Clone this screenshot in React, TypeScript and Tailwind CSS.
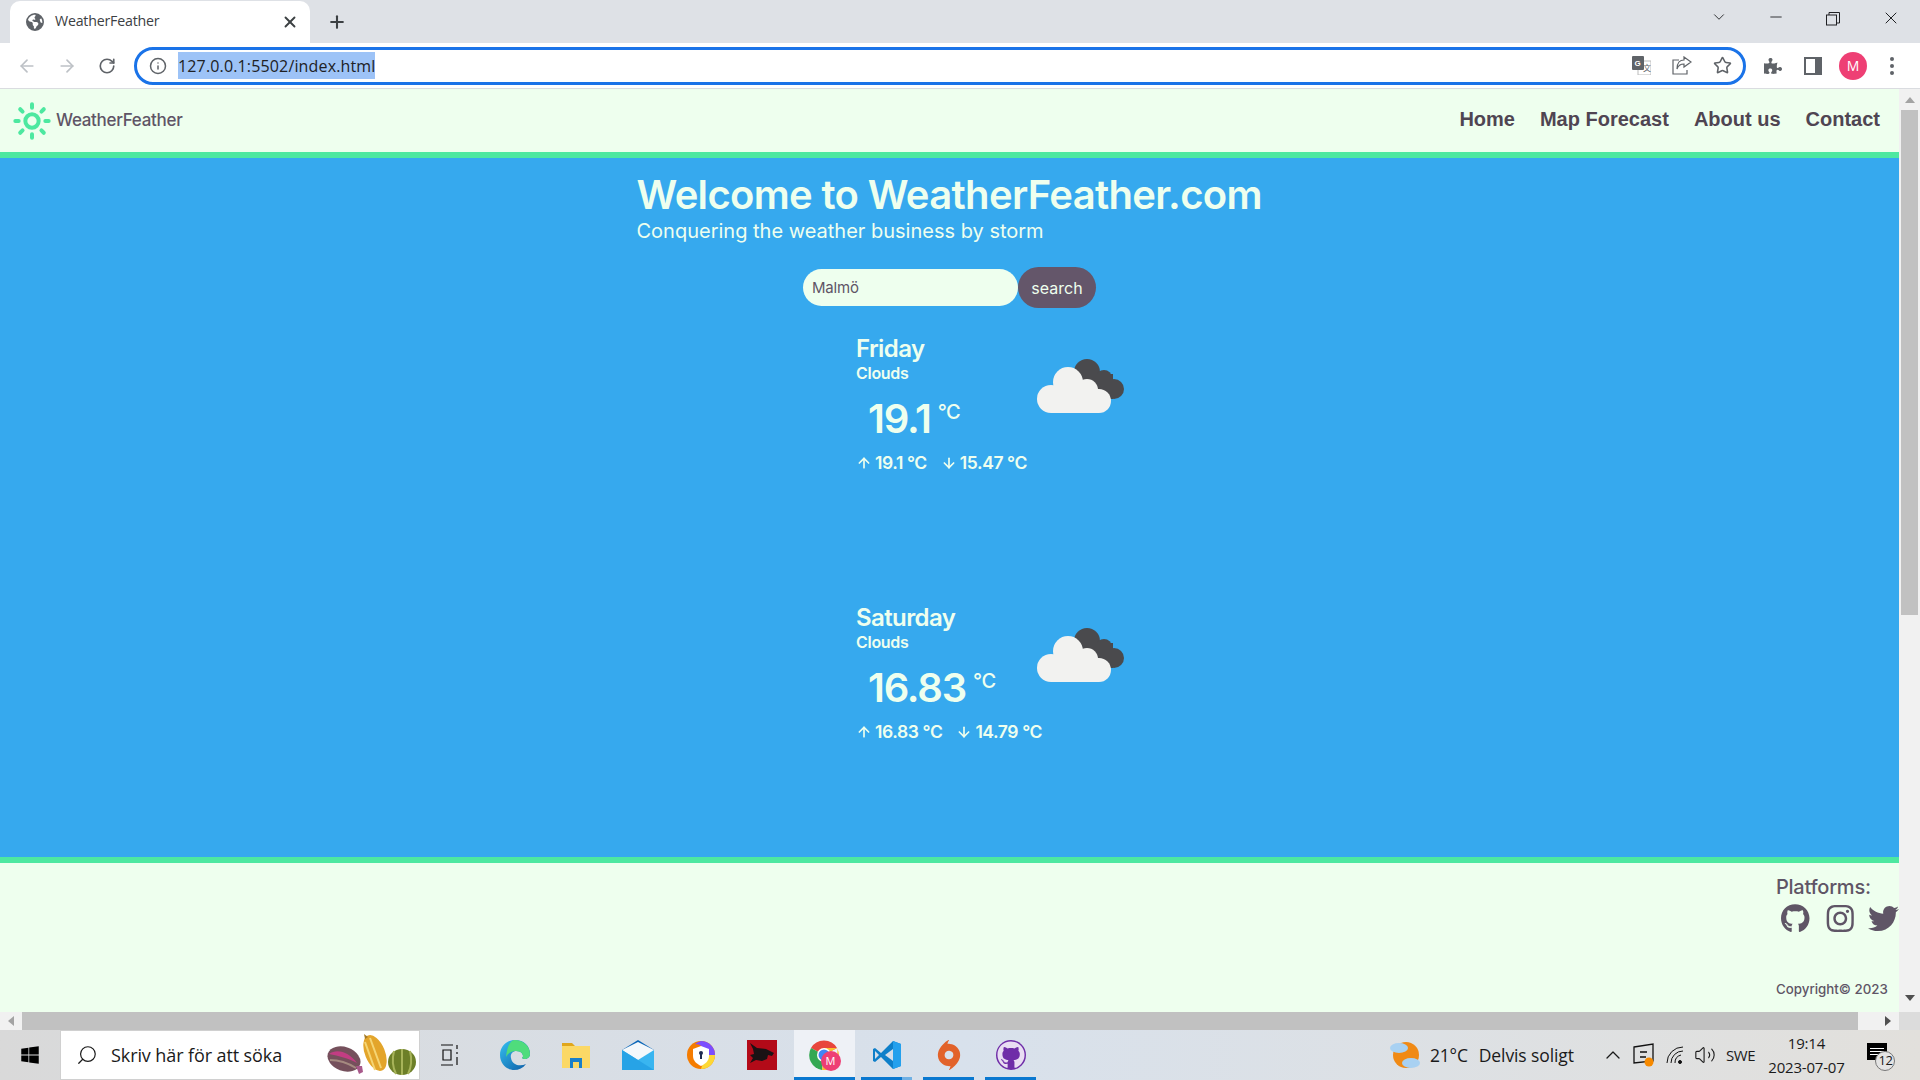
import React from 'react';
import { ArrowDown, ArrowLeft, ArrowRight, ArrowUp, ChevronDown, ChevronUp, Info, Minus, Plus, RotateCw, Search, Star, Sun, Volume2, X } from 'lucide-react';
import { FaGithub, FaInstagram, FaPuzzlePiece, FaTwitter, FaWindows } from 'react-icons/fa';
import { FaEarthAmericas } from 'react-icons/fa6';
import { SiOrigin } from 'react-icons/si';

const CloudIcon = () => (
  <svg width="88" height="55" viewBox="0 0 88 55" className="shrink-0">
    <g fill="#4a4a4d">
      <circle cx="50" cy="13" r="13" />
      <circle cx="67" cy="19" r="8" />
      <circle cx="77" cy="30" r="10" />
      <rect x="42" y="15" width="34" height="25" />
    </g>
    <g fill="#f2f2f0">
      <circle cx="14" cy="40" r="14" />
      <circle cx="31" cy="23" r="15" />
      <circle cx="50" cy="31" r="11" />
      <circle cx="62" cy="42" r="12" />
      <rect x="14" y="30" width="48" height="24" />
    </g>
  </svg>
);

const ForecastCard = ({ day, temp, high, low }: { day: string; temp: string; high: string; low: string }) => (
  <div className="ml-[83px] flex h-[269px] w-[270px] justify-between text-[#eeffee]">
    <div className="w-[148px] whitespace-nowrap">
      <div className="text-2xl leading-[29px] font-semibold tracking-[-0.6px]">{day}</div>
      <div className="text-base leading-[20px] font-semibold tracking-[-0.3px]">Clouds</div>
      <div className="mt-[12px] flex items-start pl-3">
        <span className="text-[40px] leading-[48px] font-semibold tracking-[-1.2px]">{temp}</span>
        <span className="mt-[5px] ml-[7px] text-xl leading-6 font-medium tracking-[-0.5px]">°C</span>
      </div>
      <div className="mt-[10px] flex gap-[14px] text-[17.5px] leading-5 font-semibold tracking-[-0.4px]">
        <span className="flex items-center gap-[3px]"><ArrowUp size={16} strokeWidth={2.5} />{high} °C</span>
        <span className="flex items-center gap-[3px]"><ArrowDown size={16} strokeWidth={2.5} />{low} °C</span>
      </div>
    </div>
    <div className="pt-[25px] pr-[1px]"><CloudIcon /></div>
  </div>
);

const EdgeIcon = () => (
  <svg width="32" height="32" viewBox="0 0 32 32">
    <defs>
      <linearGradient id="edgeA" x1="0" y1="0" x2="1" y2="1"><stop offset="0" stopColor="#35c1f1" /><stop offset="1" stopColor="#0c59a4" /></linearGradient>
    </defs>
    <path d="M16 1C7 1 1 8 1 16c0 9 7 15 14 15 5 0 9-2 12-6-6 3-14 1-15-6-1-4 2-7 5-7 5 0 7 3 7 5 0 1-1 2-1 2 2 2 8 1 8-4C31 7 25 1 16 1z" fill="url(#edgeA)" />
    <path d="M16 1c7 0 15 5 15 14 0 5-6 6-8 4 0 0 1-1 1-2 0-2-2-5-7-5-4 0-8 2-10 6C8 8 11 1 16 1z" fill="#4fdc7c" />
  </svg>
);

const FolderIcon = () => (
  <svg width="28" height="28" viewBox="0 0 28 28">
    <path d="M0 2h10l3 3H0z" fill="#e0a61c" />
    <rect y="5" width="28" height="22" fill="#fbd866" />
    <rect x="8" y="17" width="12" height="10" fill="#1a7fc9" />
    <rect x="11" y="21" width="6" height="6" fill="#fbd866" />
  </svg>
);

const MailIcon = () => (
  <svg width="32" height="30" viewBox="0 0 32 30">
    <path d="M0 10 16 0l16 10v20H0z" fill="#0a66b8" />
    <path d="M0 10h32v20H0z" fill="#39b5f0" />
    <path d="M0 10l16 10 16-10-16-8z" fill="#f4f8fb" />
    <path d="M0 10v20h32z" fill="#27a3e6" />
  </svg>
);

const AvastIcon = () => (
  <svg width="28" height="30" viewBox="0 0 28 30">
    <circle cx="14" cy="15" r="14" fill="#f57c00" />
    <path d="M14 1a14 14 0 0 1 14 14H18A10 10 0 0 0 8 4a14 14 0 0 1 6-3z" fill="#7c4dff" />
    <path d="M28 15a14 14 0 0 1-14 14l2-6 6-8z" fill="#fdd835" />
    <path d="M14 6l8 3v7c0 5-4 8-8 10-4-2-8-5-8-10V9z" fill="#fff" />
    <circle cx="14" cy="13" r="2" fill="#1e2a50" />
    <rect x="13" y="13" width="2" height="6" fill="#1e2a50" />
  </svg>
);

const DragonIcon = () => (
  <svg width="30" height="30" viewBox="0 0 30 30">
    <rect width="30" height="30" fill="#b30a18" />
    <path d="M3 3l7 5 9 1 8 4-2 3-4-1-1 4-5 2-6-1-6 3 3-5-3-3 4-1-1-5z" fill="#1b1214" />
  </svg>
);

const ChromeIcon = () => (
  <div className="relative h-[30px] w-[32px]">
    <svg width="30" height="30" viewBox="0 0 30 30">
      <path d="M15 15 2 8a15 15 0 0 1 26 0z" fill="#e8453c" />
      <path d="M15 15 2 8a15 15 0 0 0 11 22z" fill="#34a853" />
      <path d="M15 15h13a15 15 0 0 0 0-7H15zM15 15l13-7a15 15 0 0 1-15 22z" fill="#fbc02d" />
      <circle cx="15" cy="15" r="7" fill="#fff" />
      <circle cx="15" cy="15" r="5.5" fill="#4285f4" />
    </svg>
    <div className="absolute right-0 bottom-[-1px] flex h-[20px] w-[20px] items-center justify-center rounded-full bg-[#ee3f74] text-[11px] font-medium text-white">M</div>
  </div>
);

const VsCodeIcon = () => (
  <svg width="30" height="30" viewBox="0 0 30 30">
    <path d="M21 1 9 13 3 8 1 9v12l2 1 6-5 12 12 8-3V4z" fill="#0e7fc9" />
    <path d="M21 1l8 3v22l-8 3z" fill="#24a0ed" />
    <path d="M21 9v12l-8-6z" fill="#d5deea" />
    <path d="M3 11l4 4-4 4z" fill="#d5deea" />
  </svg>
);

const FruitIcons = () => (
  <svg width="90" height="42" viewBox="0 0 90 42">
    <ellipse cx="17" cy="25" rx="17" ry="12" transform="rotate(20 17 25)" fill="#75505c" />
    <path d="M2 20c8-6 20-2 28 9-9-5-18-7-28-9z" fill="#c23d83" />
    <path d="M3 26c9 0 18 3 26 8" stroke="#a58a80" strokeWidth="2" fill="none" />
    <path d="M29 32l6 0 1 6-4 2z" fill="#a8598b" />
    <ellipse cx="48" cy="19" rx="10" ry="19" transform="rotate(-22 48 19)" fill="#e3a52b" />
    <path d="M38 5l-1-5 4 3z" fill="#a47a24" />
    <path d="M43 4l11 30M38 8l10 28" stroke="#f5d574" strokeWidth="2" />
    <ellipse cx="75" cy="28" rx="14" ry="13" fill="#6d7f28" />
    <path d="M67 17c-2 8-2 15 2 23M75 15v26M83 17c2 8 2 15-2 23" stroke="#a8b45a" strokeWidth="2" fill="none" />
  </svg>
);

const WeatherTrayIcon = () => (
  <svg width="32" height="28" viewBox="0 0 32 28">
    <circle cx="16" cy="14" r="13" fill="#f08a15" />
    <g fill="#a8d1f2">
      <ellipse cx="9" cy="7" rx="9" ry="5" />
      <ellipse cx="21" cy="22" rx="9" ry="5" />
    </g>
  </svg>
);

const TaskButton = ({ children, active, bar, className }: { children: React.ReactNode; active?: boolean; bar?: boolean; className: string }) => (
  <div className={`relative flex h-full items-center justify-center ${active ? 'bg-[#eef1f6]' : ''} ${className}`}>
    {children}
    {bar && <div className="absolute right-0 bottom-0 left-0 h-[3px] bg-[#0a78d0]" />}
  </div>
);

const BrowserChrome = () => (
  <div className="font-['Open_Sans'] text-[#3c4043]">
    <div className="flex h-[43px] bg-[#dee1e6] pl-[10px]">
      <div className="mt-[1px] flex h-[42px] w-[300px] items-center rounded-t-[10px] bg-white pr-[11px] pl-[16px]">
        <FaEarthAmericas size={18} className="text-[#5f6368]" />
        <span className="ml-[11px] -mt-[2px] flex-1 text-[14.2px] tracking-[-0.2px]">WeatherFeather</span>
        <X size={18} strokeWidth={2.5} className="text-[#3c4043]" />
      </div>
      <div className="ml-[17px] flex h-full items-center"><Plus size={20} strokeWidth={2.5} /></div>
      <div className="ml-auto flex items-start pt-[8px] text-[#202124]">
        <ChevronDown size={18} strokeWidth={1.2} />
        <div className="ml-[39px] flex w-[18px] justify-center"><Minus size={18} strokeWidth={1.2} /></div>
        <svg width="14" height="14" viewBox="0 0 14 14" className="mt-[4px] ml-[41px]" fill="none" stroke="#202124">
          <rect x="0.5" y="3" width="10" height="10" />
          <path d="M3 3V.5h10.500V11H10.500" />
        </svg>
        <div className="mr-[19px] ml-[41px]"><X size={20} strokeWidth={1.2} /></div>
      </div>
    </div>
    <div className="flex h-[46px] items-center border-b border-[#dadce0] bg-white">
      <ArrowLeft size={20} className="ml-[17px] text-[#bdc1c6]" />
      <ArrowRight size={20} className="ml-[20px] text-[#bdc1c6]" />
      <RotateCw size={18} strokeWidth={2.2} className="ml-[21px] text-[#5f6368]" />
      <div className="ml-[18px] flex h-[38px] w-[1612px] items-center rounded-full border-[3px] border-[#1a73e8] pr-[11px] pl-[12px]">
        <Info size={18} className="text-[#5f6368]" />
        <span className="ml-[11px] flex h-[27px] items-center bg-[#9dc3f7] text-[16px] tracking-[0.15px] text-[#202124]">127.0.0.1:5502/index.html</span>
        <div className="ml-auto flex items-center gap-[21px] text-[#5f6368]">
          <svg width="19" height="19" viewBox="0 0 19 19">
            <rect x="6" y="5" width="13" height="14" fill="#fff" stroke="#bbb" />
            <rect width="12" height="14" rx="1" fill="#5f6368" />
            <text x="2.500" y="10" fontSize="8" fontWeight="700" fill="#fff" fontFamily="Liberation Sans">G</text>
            <text x="11" y="15" fontSize="8" fill="#5f6368" fontFamily="Noto Sans CJK SC">文</text>
          </svg>
          <svg width="20" height="19" viewBox="0 0 20 19" fill="none" stroke="#5f6368" strokeWidth="1.2">
            <path d="M7 4H1v14h14v-4" />
            <path d="M12 1l7 5-7 5V8C8 8 6 10 5 13c0-6 3-9 7-9z" />
          </svg>
          <Star size={19} strokeWidth={2} />
        </div>
      </div>
      <div className="ml-[18px] flex items-center text-[#5f6368]">
        <FaPuzzlePiece size={18} />
        <svg width="18" height="18" viewBox="0 0 18 18" className="ml-[22px]">
          <rect width="18" height="18" fill="#5f6368" />
          <rect x="2" y="2" width="9" height="14" fill="#fff" />
        </svg>
        <div className="ml-[17px] flex h-[28px] w-[28px] items-center justify-center rounded-full bg-[#ee3f74] text-[14px] text-white">M</div>
        <div className="mr-[13px] ml-[23px] flex flex-col gap-[3px]">
          <span className="h-[4px] w-[4px] rounded-full bg-[#5f6368]" />
          <span className="h-[4px] w-[4px] rounded-full bg-[#5f6368]" />
          <span className="h-[4px] w-[4px] rounded-full bg-[#5f6368]" />
        </div>
      </div>
    </div>
  </div>
);

const WebPage = () => (
  <div className="flex h-[923px] w-[1899px] flex-col overflow-hidden font-[Inter]">
    <header className="flex h-[69px] items-center justify-between border-b-[6px] border-[#4de8a0] bg-[#eeffee] pr-[19px] pl-[12px] text-[#5f5566]">
      <div className="flex items-center">
        <Sun size={40} strokeWidth={2.4} className="text-[#4de8a0]" />
        <span className="ml-[4px] text-[17px] font-medium tracking-[-0.3px]">WeatherFeather</span>
      </div>
      <nav className="-mt-[3px] flex gap-[25px] font-['Liberation_Sans'] text-[20px] font-bold text-[#4f4552]">
        <a>Home</a>
        <a>Map Forecast</a>
        <a>About us</a>
        <a>Contact</a>
      </nav>
    </header>
    <main className="flex h-[699px] flex-col items-center bg-[#36a9ee] pt-[13px]">
      <div className="w-[626px] text-[#eeffee]">
        <h1 className="text-[40px] leading-[48px] font-semibold tracking-[-0.66px] whitespace-nowrap">Welcome to WeatherFeather.com</h1>
        <p className="text-xl leading-[24px]">Conquering the weather business by storm</p>
      </div>
      <form className="mt-[24px] flex items-center">
        <input readOnly value="Malmö" className="h-[37px] w-[215px] rounded-full bg-[#eeffee] px-[9px] text-[15px] tracking-[-0.2px] text-[#5f5566] outline-none" />
        <button type="button" className="h-[41px] w-[78px] rounded-full bg-[#64566a] text-[16px] text-[#eeffee]">search</button>
      </form>
      <div className="mt-[26px]">
        <ForecastCard day="Friday" temp="19.1" high="19.1" low="15.47" />
        <ForecastCard day="Saturday" temp="16.83" high="16.83" low="14.79" />
      </div>
    </main>
    <footer className="flex h-[155px] justify-end border-t-[6px] border-[#4de8a0] bg-[#eeffee] text-[#5f5566]">
      <div className="w-[123px]">
        <div className="mt-[12px] text-xl leading-[24px] font-medium tracking-[-0.25px]">Platforms:</div>
        <div className="mt-[4px] flex items-center pl-[5px]">
          <FaGithub size={31} />
          <FaInstagram size={31} className="ml-[16px]" />
          <FaTwitter size={31} className="ml-[14px] shrink-0" />
        </div>
        <div className="mt-[47px] text-[13.3px] leading-[17px] font-medium">Copyright© 2023</div>
      </div>
    </footer>
  </div>
);

const Taskbar = () => (
  <div className="flex h-[50px] items-center bg-gradient-to-r from-[#d9d9d9] via-[#d8e1ec] to-[#e2e0dc] font-['Open_Sans'] text-[#1a1a1a]">
    <div className="flex h-full w-[60px] items-center justify-center"><FaWindows size={20} className="text-black" /></div>
    <div className="flex h-full w-[360px] items-center border border-[#d0d0d0] bg-white pl-[15px]">
      <Search size={22} strokeWidth={1.3} className="-scale-x-100" />
      <span className="ml-[13px] text-[18px] tracking-[-0.1px] whitespace-nowrap">Skriv här för att söka</span>
      <div className="mr-[2px] ml-auto"><FruitIcons /></div>
    </div>
    <div className="ml-[20px] flex h-full w-[20px] items-center">
      <svg width="20" height="22" viewBox="0 0 20 22" fill="none" stroke="#111" strokeWidth="1.2">
        <path d="M1 1h12M3 6h8v10H3zM1 21h12M17 1v4M17 8v2M17 13v8" />
      </svg>
    </div>
    <div className="ml-[39px] flex h-full"><TaskButton className="w-[32px]"><EdgeIcon /></TaskButton></div>
    <div className="ml-[31px] flex h-full"><TaskButton className="w-[28px]"><FolderIcon /></TaskButton></div>
    <div className="ml-[32px] flex h-full"><TaskButton className="w-[32px]"><MailIcon /></TaskButton></div>
    <div className="ml-[32px] flex h-full"><TaskButton className="w-[30px]"><AvastIcon /></TaskButton></div>
    <div className="ml-[31px] flex h-full"><TaskButton className="w-[30px]"><DragonIcon /></TaskButton></div>
    <div className="ml-[17px] flex h-full"><TaskButton active bar className="w-[61px]"><ChromeIcon /></TaskButton></div>
    <div className="ml-[6px] flex h-full">
      <TaskButton className="w-[51px]">
        <VsCodeIcon />
        <div className="absolute right-0 bottom-0 left-0 h-[3px] bg-[#0a78d0]"><div className="ml-auto h-full w-[10px] bg-[#6fb0e4]" /></div>
      </TaskButton>
    </div>
    <div className="ml-[11px] flex h-full"><TaskButton bar className="w-[51px]"><SiOrigin size={30} className="text-[#e2622a]" /></TaskButton></div>
    <div className="ml-[11px] flex h-full">
      <TaskButton bar className="w-[51px]">
        <div className="flex h-[30px] w-[30px] items-center justify-center rounded-full bg-[#6f2da8]"><FaGithub size={28} className="text-[#e9ddf3]" /></div>
      </TaskButton>
    </div>
    <div className="ml-[354px] flex h-full items-center">
      <WeatherTrayIcon />
      <span className="ml-[8px] text-[17.5px] tracking-[-0.2px] whitespace-nowrap">21°C</span>
      <span className="ml-[11px] text-[17.5px] tracking-[-0.1px] whitespace-nowrap">Delvis soligt</span>
      <ChevronUp size={24} strokeWidth={1.3} className="ml-[27px]" />
      <svg width="22" height="24" viewBox="0 0 22 24" className="ml-[8px]" fill="none" stroke="#111" strokeWidth="1.3">
        <path d="M1 4l19-3v17L1 20z" />
        <path d="M7 9h7M7 14h6" />
        <circle cx="16" cy="19" r="4.500" fill="#f78a00" stroke="none" />
      </svg>
      <svg width="18" height="18" viewBox="0 0 18 18" className="ml-[11px]" fill="none" stroke="#111" strokeWidth="1">
        <path d="M1 17A16 16 0 0 1 17 1M5 17A12 12 0 0 1 17 5M9 17a8 8 0 0 1 6-8" />
        <circle cx="14" cy="16" r="1.500" fill="#111" />
      </svg>
      <Volume2 size={22} strokeWidth={1.2} className="ml-[10px]" />
      <span className="ml-[10px] text-[15px] tracking-[-0.3px]">SWE</span>
      <div className="ml-[11px] flex w-[80px] flex-col items-center text-[15px] leading-[24px] tracking-[-0.2px]">
        <span>19:14</span>
        <span>2023-07-07</span>
      </div>
      <div className="relative ml-[21px] h-[24px] w-[30px]">
        <div className="flex h-[17px] w-[20px] flex-col justify-center gap-[2px] bg-black px-[3px]">
          <span className="h-[1px] bg-white" /><span className="h-[1px] bg-white" /><span className="h-[1px] bg-white" />
        </div>
        <div className="absolute top-[8px] left-[8px] flex h-[20px] w-[20px] items-center justify-center rounded-full border border-[#777] bg-[#e4e4e4] text-[13px] tracking-[-0.5px]">12</div>
      </div>
    </div>
  </div>
);

const App = () => (
  <div className="flex h-screen w-screen flex-col overflow-hidden bg-white">
    <BrowserChrome />
    <div className="flex h-[941px]">
      <div className="flex w-[1899px] flex-col">
        <WebPage />
        <div className="flex h-[18px] items-center bg-[#f1f1f1]">
          <div className="flex w-[22px] justify-center"><span className="h-0 w-0 border-y-[5px] border-r-[6px] border-y-transparent border-r-[#a3a3a3]" /></div>
          <div className="h-full w-[1836px] bg-[#c1c1c1]" />
          <div className="flex flex-1 justify-end pr-[8px]"><span className="h-0 w-0 border-y-[5px] border-l-[6px] border-y-transparent border-l-[#505050]" /></div>
        </div>
      </div>
      <div className="flex w-[21px] flex-col bg-[#f1f1f1]">
        <div className="flex h-[21px] items-center justify-center"><span className="h-0 w-0 border-x-[5px] border-b-[6px] border-x-transparent border-b-[#a3a3a3]" /></div>
        <div className="mx-[2px] h-[505px] bg-[#c1c1c1]" />
        <div className="mt-[374px] flex h-[18px] items-center justify-center"><span className="h-0 w-0 border-x-[5px] border-t-[6px] border-x-transparent border-t-[#505050]" /></div>
        <div className="mt-auto h-[18px] bg-[#dcdcdc]" />
      </div>
    </div>
    <Taskbar />
  </div>
);

export default App;
